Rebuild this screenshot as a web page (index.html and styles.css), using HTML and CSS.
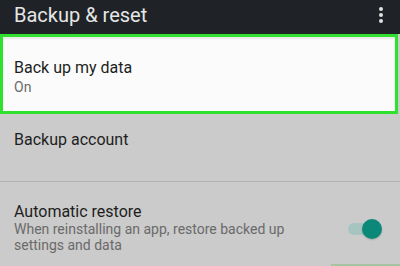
FILE: index.html
```html
<!DOCTYPE html>
<html>
<head>
<meta charset="utf-8">
<link rel="stylesheet" href="styles.css">
</head>
<body>
<div class="screen">
  <header class="appbar">
    <div class="title">Backup &amp; reset</div>
    <div class="menu"><span></span><span></span><span></span></div>
  </header>
  <div class="item highlighted">
    <div class="primary">Back up my data</div>
    <div class="secondary">On</div>
  </div>
  <div class="item account">
    <div class="primary">Backup account</div>
  </div>
  <div class="divider"></div>
  <div class="item restore">
    <div class="texts">
      <div class="primary">Automatic restore</div>
      <div class="secondary">When reinstalling an app, restore backed up<br>settings and data</div>
    </div>
    <div class="switch"><div class="track"></div><div class="thumb"></div></div>
  </div>
  <div class="footer"><div class="strip"></div></div>
</div>
</body>
</html>
```

FILE: styles.css
```css
html, body {
  margin: 0;
  padding: 0;
}
body {
  background: #cbcbcb;
  font-family: Roboto, "Liberation Sans", sans-serif;
  width: 400px;
  height: 266px;
  overflow: hidden;
}
.screen {
  display: flex;
  flex-direction: column;
  height: 266px;
}
.appbar {
  height: 34px;
  flex: none;
  background: #1f2327;
  display: flex;
  align-items: center;
  justify-content: space-between;
  padding: 0 17px 0 14px;
  box-sizing: border-box;
}
.title {
  color: #e6e6e6;
  font-size: 20px;
  line-height: 24px;
  margin-top: -5px;
}
.menu {
  display: flex;
  flex-direction: column;
  gap: 2px;
  margin-top: -5px;
}
.menu span {
  width: 4px;
  height: 4px;
  border-radius: 50%;
  background: #e0e0e0;
}
.item {
  padding-left: 14px;
  box-sizing: border-box;
}
.primary {
  font-size: 16px;
  line-height: 19px;
  color: #1e1e1e;
}
.secondary {
  font-size: 14px;
  line-height: 15.5px;
  color: #6a6a6a;
}
.highlighted {
  height: 80px;
  flex: none;
  margin-right: 2px;
  background: #fbfbfb;
  border: 3px solid #2fe02f;
  padding-left: 11px;
  padding-top: 21px;
  box-shadow: inset 0 2px 2px rgba(0,0,0,0.08);
}
.highlighted .secondary {
  margin-top: 2px;
  line-height: 16px;
}
.account {
  height: 67px;
  flex: none;
  padding-top: 16px;
}
.divider {
  height: 1px;
  flex: none;
  background: #b3b3b3;
}
.restore {
  flex: none;
  display: flex;
  align-items: flex-start;
  justify-content: space-between;
  padding-top: 20px;
  padding-right: 18px;
  height: 82px;
}
.restore .secondary {
  margin-top: 1px;
}
.switch {
  position: relative;
  width: 34px;
  height: 20px;
  margin-top: 17px;
}
.track {
  position: absolute;
  left: 0;
  top: 4px;
  width: 30px;
  height: 12px;
  border-radius: 6px;
  background: #a6c4c0;
}
.thumb {
  position: absolute;
  left: 14px;
  top: 0;
  width: 20px;
  height: 20px;
  border-radius: 50%;
  background: #0b8878;
  box-shadow: 0 1px 2px rgba(0,0,0,0.15);
}
.footer {
  flex: 1;
  display: flex;
  justify-content: flex-end;
  align-items: flex-end;
}
.strip {
  width: 69px;
  height: 2px;
  background: #a8c3a0;
}
```
